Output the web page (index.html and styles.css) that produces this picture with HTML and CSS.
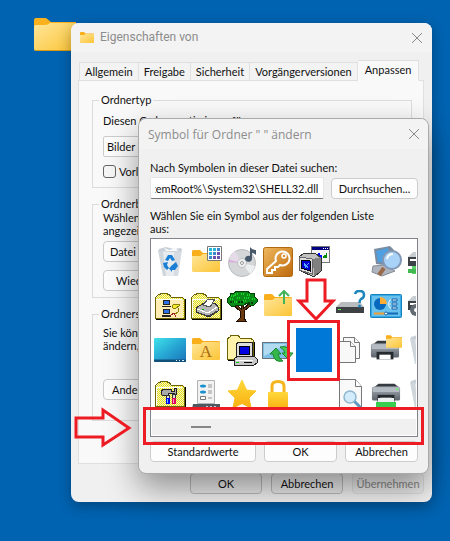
FILE: index.html
```
<!DOCTYPE html>
<html lang="de">

<head>
    <meta charset="utf-8">
    <title>Eigenschaften</title>
    <link rel="stylesheet" href="styles.css">
</head>

<body>
    <svg class="defs" width="0" height="0" aria-hidden="true">
        <defs>
            <linearGradient id="gold" x1="0" y1="0" x2="1" y2="1">
                <stop offset="0" stop-color="#ffe69a" />
                <stop offset="1" stop-color="#fbc435" />
            </linearGradient>
            <linearGradient id="blue" x1="0" y1="0" x2="1" y2="1">
                <stop offset="0" stop-color="#3fe3ea" />
                <stop offset="0.5" stop-color="#27a7d4" />
                <stop offset="1" stop-color="#1a72b8" />
            </linearGradient>
            <linearGradient id="orange" x1="0" y1="0" x2="1" y2="1">
                <stop offset="0" stop-color="#efb75c" />
                <stop offset="1" stop-color="#bd6a0c" />
            </linearGradient>
            <linearGradient id="star" x1="0" y1="0" x2="0" y2="1">
                <stop offset="0" stop-color="#ffd83a" />
                <stop offset="1" stop-color="#f9b011" />
            </linearGradient>
            <linearGradient id="steel" x1="0" y1="0" x2="0" y2="1">
                <stop offset="0" stop-color="#a9b0b8" />
                <stop offset="1" stop-color="#5c636b" />
            </linearGradient>
            <pattern id="dither" width="2" height="2" patternUnits="userSpaceOnUse">
                <rect width="2" height="2" fill="#e9e9d8" />
                <rect width="1" height="1" fill="#f4f000" />
                <rect x="1" y="1" width="1" height="1" fill="#e8e000" />
            </pattern>
            <symbol id="folder" viewBox="0 0 28 22">
                <path d="M0 1.500Q0 0 1.500 0H8L11 3H26.500Q28 3 28 4.500V10H0z" fill="#f9ae1c" />
                <path d="M0 6H8.500L11 4H26.500Q28 4 28 5.500V20.500Q28 22 26.500 22H1.500Q0 22 0 20.500z" fill="url(#gold)" />
            </symbol>
            <symbol id="oldfolder" viewBox="0 0 32 32">
                <path d="M1 28V8L4 5V4H6V3H13V4H15L17 7H28L30 9V28z" fill="url(#dither)" stroke="#6b6400" />
                <path d="M2 29.500H31.500V9" fill="none" stroke="#000" stroke-width="1.500" />
                <path d="M2.500 27V9H28" fill="none" stroke="#fff" />
            </symbol>
            <symbol id="printer" viewBox="0 0 32 32">
                <path d="M3 10L8 6H25L30 10z" fill="#343a40" />
                <path d="M1 11Q1 9 3 9H29Q31 9 31 11V22Q31 24 29 24H3Q1 24 1 22z" fill="url(#steel)" />
                <path d="M2 10H30V15H2z" fill="#b4bbc2" />
                <path d="M7 18H25V26H7z" fill="#252a2f" />
                <path d="M10 21H22V26H10z" fill="#fff" />
                <circle cx="28" cy="12" r="1" fill="#5f5" />
            </symbol>
            <symbol id="bin" viewBox="0 0 32 32">
                <path d="M4 4L28 3 24 30H9z" fill="#e8ecef" />
                <path d="M4 4L9 30 12 30 9 5z" fill="#cfd6dc" />
                <path d="M20 5L28 3 24 30H20z" fill="#d6dce1" />
                <path d="M5 3L12 1 20 3 27 2 28 5 18 6 5 5z" fill="#c8cfd6" />
                <path d="M10 2L15 4 22 2 24 5 12 5z" fill="#f7f9fa" />
            </symbol>
        </defs>
    </svg>

    <main class="desktop">
        <svg class="desktop-folder" viewBox="0 0 42 34">
            <path d="M0 2Q0 0 2 0H12L17 4H42V16H0z" fill="#f9b21d" />
            <path d="M0 9Q0 7 2 7H11Q14 7 16 5H42V33H2Q0 33 0 31z" fill="url(#gold)" />
            <path d="M1 32.500H42" stroke="#d99a13" />
        </svg>

        <section class="window properties">
            <header class="titlebar">
                <svg class="title-icon" viewBox="0 0 28 22"><use href="#folder" /></svg>
                <h1>Eigenschaften von</h1>
                <button class="close" aria-label="Schließen"><svg viewBox="0 0 10 10"><path d="M0 0L10 10M10 0L0 10" /></svg></button>
            </header>
            <nav class="tabs">
                <button class="tab">Allgemein</button>
                <button class="tab">Freigabe</button>
                <button class="tab">Sicherheit</button>
                <button class="tab">Vorgängerversionen</button>
                <button class="tab active">Anpassen</button>
            </nav>
            <div class="panel">
                <fieldset class="group type">
                    <legend>Ordnertyp</legend>
                    <label for="typ">Diesen Ordner optimieren für:</label>
                    <select id="typ">
                        <option>Bilder</option>
                    </select>
                    <div class="check">
                        <input type="checkbox" id="vorlage">
                        <label for="vorlage">Vorlage</label>
                    </div>
                </fieldset>
                <fieldset class="group image">
                    <legend>Ordnerbilder</legend>
                    <p>Wählen<br>angezeigt</p>
                    <button class="btn">Datei auswählen</button>
                    <button class="btn">Wiederher</button>
                </fieldset>
                <fieldset class="group symbol">
                    <legend>Ordnersymbole</legend>
                    <p>Sie können<br>ändern, das</p>
                    <button class="btn">Anderes</button>
                </fieldset>
            </div>
            <footer class="buttons">
                <button class="btn">OK</button>
                <button class="btn">Abbrechen</button>
                <button class="btn" disabled>Übernehmen</button>
            </footer>
        </section>

        <section class="window chooser">
            <header class="titlebar">
                <h2>Symbol für Ordner " " ändern</h2>
                <button class="close" aria-label="Schließen"><svg viewBox="0 0 10 10"><path d="M0 0L10 10M10 0L0 10" /></svg></button>
            </header>
            <div class="chooser-body">
                <label for="datei">Nach Symbolen in dieser Datei suchen:</label>
                <div class="file-row">
                    <input type="text" id="datei" value="%SystemRoot%\System32\SHELL32.dll">
                    <button class="btn">Durchsuchen...</button>
                </div>
                <p class="hint">Wählen Sie ein Symbol aus der folgenden Liste<br>aus:</p>
                <div class="list">
                    <div class="icons">
                        <button class="icon" aria-label="Papierkorb">
                            <svg viewBox="0 0 32 32">
                                <use href="#bin" />
                                <path d="M11 14L14 9H18L21 14 18 15 16 12 14 15zM9 17L14 16 13 19 15 22 13 24 10 21zM17 20L22 16 24 20 21 24H18V26L15 22.500 18 19z" fill="#1c7fd6" />
                            </svg>
                        </button>
                        <button class="icon" aria-label="Programme">
                            <svg viewBox="0 0 32 32">
                                <use href="#folder" x="2" y="4" width="28" height="22" />
                                <path d="M17.500 0.500H31.500V14.500H17.500z" fill="#fff" stroke="#777" />
                                <path d="M19 2h3v3h-3zM19 6h3v3h-3zM23 2h3v3h-3z" fill="#29b5d8" />
                                <path d="M27 2h3v3h-3zM23 6h3v3h-3zM19 10h3v3h-3z" fill="#3b87cf" />
                                <path d="M27 6h3v3h-3zM23 10h3v3h-3zM27 10h3v3h-3z" fill="#6b50ae" />
                            </svg>
                        </button>
                        <button class="icon" aria-label="Musik">
                            <svg viewBox="0 0 32 32">
                                <circle cx="16" cy="17" r="13.500" fill="#d4d6d8" stroke="#b9bcbf" />
                                <path d="M16 17L3 13A14 14 0 0 1 9 5z" fill="#e6dbe8" />
                                <path d="M16 17L24 28A14 14 0 0 0 29 20z" fill="#edf0f1" />
                                <path d="M16 17L3 14V16z" fill="#dca7dd" />
                                <circle cx="16" cy="17" r="4.500" fill="#eceeef" stroke="#bfc2c4" />
                                <circle cx="16" cy="17" r="1.500" fill="#fff" stroke="#999" />
                                <path d="M24 1Q26 4 30 4V9Q28 7 26 7V13A3.500 3 0 1 1 24 10z" fill="#46586a" />
                            </svg>
                        </button>
                        <button class="icon" aria-label="Schlüssel">
                            <svg viewBox="0 0 32 32">
                                <rect x="1.500" y="1.500" width="29" height="29" rx="2" fill="url(#orange)" stroke="#b0690f" />
                                <path d="M14 15A7 7 0 1 1 18 19L16 21H13V24H10V27H5V23z" fill="none" stroke="#fff" stroke-width="2" />
                                <circle cx="22" cy="10" r="2" fill="none" stroke="#fff" stroke-width="1.500" />
                            </svg>
                        </button>
                        <button class="icon" aria-label="Computer">
                            <svg viewBox="0 0 32 32" shape-rendering="crispEdges">
                                <path d="M13 0H31V16H13z" fill="#f4f4f4" stroke="#777" />
                                <path d="M14 1H31V4H14z" fill="#000080" />
                                <path d="M25 2h1v1h-1zM27 2h1v1h-1zM29 2h1v1h-1z" fill="#fff" />
                                <path d="M20 7h2v2h2v3h-2v-2h-2z" fill="#00f" />
                                <path d="M26 9h2v-2h1v5h-4v-2h1z" fill="#080" />
                                <path d="M1 11L6 7H17L23 12V25L16 31 1 24z" fill="#c0c0c0" stroke="#333" />
                                <path d="M15 13L23 11V25L16 30z" fill="#808080" />
                                <path d="M1 11L14 13V28L1 24z" fill="#ddd" stroke="#666" />
                                <path d="M3 14L12 15V25L3 22z" fill="#0000d0" stroke="#000" />
                                <path d="M6 17h1v1h1v1h1v-1h1v-1h1v1h-1v1h-1v1h1v2h-1v-1h-1v1h-1v-2h-1z" fill="#5af" />
                            </svg>
                        </button>
                        <span class="icon"></span>
                        <button class="icon" aria-label="Suchen">
                            <svg viewBox="0 0 32 32">
                                <path d="M4 3L20 0 24 4 21 20 6 18z" fill="#7c8ca0" />
                                <path d="M6 5L18 2 20 17 8 16z" fill="#4fa0e3" />
                                <path d="M3 20L15 19 25 25 12 30 2 26z" fill="#aeb5bf" stroke="#858c98" />
                                <path d="M14 22L9 29" stroke="#9b6a48" stroke-width="4" />
                                <circle cx="22" cy="14" r="9" fill="#a9d2f8" stroke="#8197b5" stroke-width="2" />
                                <path d="M17 13Q18 8 23 8" fill="none" stroke="#fff" stroke-width="2" />
                            </svg>
                        </button>
                        <button class="icon" aria-label="Laufwerk">
                            <svg viewBox="0 0 32 32">
                                <path d="M2 11L7 6H28V11z" fill="#c8cdd2" />
                                <path d="M2 11H30V20H2z" fill="#3d4247" />
                                <path d="M4 13H30V15H4z" fill="#fff" />
                                <path d="M6 20H28V28H6z" fill="#5ad169" />
                                <path d="M2 23H12V27H2z" fill="#43b750" />
                            </svg>
                        </button>

                        <button class="icon" aria-label="Netzwerkordner">
                            <svg viewBox="0 0 32 32" shape-rendering="crispEdges">
                                <use href="#oldfolder" />
                                <path d="M2 10H29V28H2z" fill="#ffedb4" />
                                <path d="M9 10h7v5h-7zM8 16h9v1h-9zM9 19h7v5h-7zM8 25h9v2h-9z" fill="#222" />
                                <path d="M10 11h5v3h-5zM10 20h5v3h-5z" fill="#2b72e8" />
                                <path d="M18 16L20 14H25V16L22 18H19z" fill="#f4ec30" stroke="#8a8000" />
                                <path d="M24 18V22L21 24" fill="none" stroke="#8a8000" />
                                <path d="M16 26L20 23 22 27" fill="none" stroke="#a02020" />
                            </svg>
                        </button>
                        <button class="icon" aria-label="Druckerordner">
                            <svg viewBox="0 0 32 32" shape-rendering="crispEdges">
                                <use href="#oldfolder" />
                                <path d="M6 18L14 13H25L28 17V21L19 27 6 22z" fill="#b8b8b8" stroke="#333" />
                                <path d="M13 15L18 9H25L20 17z" fill="#fff" stroke="#555" />
                                <path d="M7 19L18 23 27 17" fill="none" stroke="#fff" />
                                <path d="M8 23L19 26 27 21" fill="none" stroke="#444" />
                                <path d="M12 19h2v1h-2z" fill="#0a0" />
                            </svg>
                        </button>
                        <button class="icon" aria-label="Baum">
                            <svg viewBox="0 0 32 32" shape-rendering="crispEdges">
                                <path d="M7 15L14 21V28L11 31H20L18 28V21L26 15 24 13 17 19V13H15V19L9 13z" fill="#6b3a10" stroke="#1e0c00" />
                                <path d="M1 9L4 6V3H8L11 1H21L24 3H28V6L31 9V12L28 15H24L21 13 18 15H12L9 16H5L1 12z" fill="#0a8a16" stroke="#043f08" />
                                <path d="M5 6H9V4H13M15 4H19M21 5H25M4 9H8M11 8H15M18 8H23M26 9H29M8 12H12M17 11H21" fill="none" stroke="#16d52b" stroke-width="2" stroke-dasharray="1 1" />
                                <path d="M4 12H8M12 12H17M22 13H28" stroke="#033d08" stroke-width="2" stroke-dasharray="2 1" />
                            </svg>
                        </button>
                        <button class="icon" aria-label="Ordner nach oben">
                            <svg viewBox="0 0 32 32">
                                <use href="#folder" x="2" y="4" width="28" height="22" />
                                <path d="M22 14V2M17 6L22 1 27 6" fill="none" stroke="#43b45c" stroke-width="2" />
                            </svg>
                        </button>
                        <span class="icon"></span>
                        <button class="icon" aria-label="Unbekanntes Laufwerk">
                            <svg viewBox="0 0 32 32">
                                <path d="M2 17L7 12H26L30 17z" fill="#babdbf" />
                                <path d="M2 17H30V23H2z" fill="#3e4244" />
                                <path d="M4 19H7V20H4z" fill="#5cf45c" />
                                <path d="M21 4Q22 0.500 26 1 30 1 30 5 30 8 27 9 25.500 10 25.500 13" fill="none" stroke="#1d87bd" stroke-width="2.500" />
                                <circle cx="25.500" cy="16" r="1.500" fill="#1d87bd" />
                            </svg>
                        </button>
                        <button class="icon" aria-label="Systemsteuerung">
                            <svg viewBox="0 0 32 32">
                                <rect x="0.500" y="4.500" width="31" height="23" rx="1" fill="#39a9e5" stroke="#1683bf" />
                                <path d="M2 6H30V26H2z" fill="#b2e6fb" opacity="0.400" />
                                <circle cx="10" cy="14" r="6" fill="#0768bd" />
                                <path d="M10 14V7A7 7 0 0 1 17 14z" fill="#ffae35" />
                                <path d="M18 14L20 10H23M19 14H28M18 14L20 18H23" fill="none" stroke="#eef8ff" />
                                <path d="M22 9h5v2h-5zM22 13h5v2h-5zM22 17h5v2h-5z" fill="#fff" stroke="#0c5daa" />
                                <path d="M4 23.500H16" stroke="#ef9e32" stroke-width="2" />
                                <path d="M16 23.500H28" stroke="#1269b4" stroke-width="2" />
                                <circle cx="16" cy="23.500" r="1.500" fill="#fff" stroke="#1269b4" />
                            </svg>
                        </button>
                        <button class="icon" aria-label="Laufwerk">
                            <svg viewBox="0 0 32 32">
                                <path d="M2 11L7 6H28V11z" fill="#c8cdd2" />
                                <path d="M2 11H30V20H2z" fill="#3d4247" />
                                <path d="M4 13H30V15H4z" fill="#fff" />
                                <circle cx="10" cy="20" r="6" fill="#626a72" />
                                <circle cx="10" cy="20" r="2" fill="#fff" />
                            </svg>
                        </button>

                        <button class="icon" aria-label="Desktop">
                            <svg viewBox="0 0 32 32">
                                <rect x="0" y="4" width="32" height="24" rx="1" fill="url(#blue)" />
                                <path d="M0 25.500H32V27Q32 28 31 28H1Q0 28 0 27z" fill="#124f79" />
                                <path d="M22 26h1v1h-1zM25 26h1v1h-1zM28 26h2v1h-2z" fill="#d6f3ff" />
                            </svg>
                        </button>
                        <button class="icon" aria-label="Schriftarten">
                            <svg viewBox="0 0 32 32">
                                <use href="#folder" x="2" y="4" width="28" height="22" />
                                <text class="font-letter" x="16" y="23" text-anchor="middle">A</text>
                            </svg>
                        </button>
                        <button class="icon" aria-label="Computerordner">
                            <svg viewBox="0 0 32 32" shape-rendering="crispEdges">
                                <path d="M1 25V5L4 3 5 1H12L14 4H24L27 6V25z" fill="#fff3ac" stroke="#6b6400" />
                                <path d="M2 26H28V8" fill="none" stroke="#000" />
                                <path d="M10 10L13 8H26V22L24 24H11z" fill="#ddd" stroke="#222" />
                                <path d="M13 12H23V20H13z" fill="#0000e0" stroke="#000" />
                                <path d="M8 25L12 22H28L31 25V29L28 31H8z" fill="#c8c8c8" stroke="#222" />
                                <path d="M10 26H27" stroke="#fff" />
                                <path d="M18 28H26" stroke="#000" />
                                <path d="M10 28h3v1h-3z" fill="#0c0" />
                            </svg>
                        </button>
                        <button class="icon" aria-label="Synchronisieren">
                            <svg viewBox="0 0 32 32">
                                <rect x="0.500" y="8.500" width="26" height="16" fill="#7fc0e6" stroke="#69747c" />
                                <path d="M2 10H25L2 22z" fill="#c7e7f7" opacity="0.700" />
                                <path d="M8 20L14 14 19 20H16Q17 25 21 27 12 29 11 20z" fill="#35b64a" stroke="#188a2c" />
                                <path d="M31 19L26 25 20 19H23Q22 15 18 13 27 11 28 19z" fill="#4bcc58" stroke="#188a2c" />
                            </svg>
                        </button>
                        <button class="icon selected" aria-label="Leeres Symbol"></button>
                        <button class="icon" aria-label="Kopieren">
                            <svg viewBox="0 0 32 32" fill="#f8f8f8" stroke="#777">
                                <path d="M9.500 3.500H20.500L25.500 8.500V24.500H9.500z" />
                                <path d="M20.500 3.500V8.500H25.500" />
                                <path d="M4.500 7.500H16.500L21.500 12.500V28.500H4.500z" />
                                <path d="M16.500 7.500V12.500H21.500" />
                            </svg>
                        </button>
                        <button class="icon" aria-label="Drucker">
                            <svg viewBox="0 0 32 32">
                                <use href="#printer" width="30" height="30" y="1" />
                                <use href="#folder" x="16" y="1" width="16" height="13" />
                            </svg>
                        </button>
                        <button class="icon" aria-label="Papierkorb"><svg viewBox="0 0 32 32"><use href="#bin" /></svg></button>

                        <button class="icon" aria-label="Verwaltung">
                            <svg viewBox="0 0 32 32" shape-rendering="crispEdges">
                                <use href="#oldfolder" />
                                <path d="M7 13L10 11H17V13H20V10H22V16H20V15H14V17H8z" fill="#aaa" stroke="#222" />
                                <path d="M12 17h3v4h-3zM18 16h3v5h-3z" fill="#ddd" stroke="#333" />
                                <path d="M12 20h4v6h-4z" fill="#00e" />
                                <path d="M18 20h4v6h-4z" fill="#e00060" />
                                <path d="M13 21h1v4h-1z" fill="#5cf" />
                                <path d="M19 21h1v4h-1z" fill="#f9c" />
                            </svg>
                        </button>
                        <button class="icon" aria-label="Server">
                            <svg viewBox="0 0 32 32">
                                <path d="M7.500 2.500H24.500V25.500H7.500z" fill="#f2f2f2" stroke="#b0b4b7" />
                                <ellipse cx="13" cy="8" rx="3" ry="1.500" fill="#1690ce" />
                                <ellipse cx="13" cy="14" rx="3" ry="1.500" fill="#1690ce" />
                                <path d="M10.500 18.500H15.500V21.500H10.500z" fill="#fff" stroke="#777" />
                                <path d="M18 7H22M18 9H22M18 13H22M18 15H22M18 20H22" stroke="#999" />
                                <path d="M3 26H30V31H2z" fill="#4d5861" />
                                <path d="M16 28h2v2h-2zM20 28h2v2h-2zM24 28h2v2h-2z" fill="#c4d0d8" />
                            </svg>
                        </button>
                        <button class="icon" aria-label="Favoriten">
                            <svg viewBox="0 0 32 32">
                                <path d="M16 2L20.500 12 30 13 23 20 25 30 16 25.500 7 30 9 20 2 13 11.500 12z" fill="url(#star)" stroke="url(#star)" stroke-linejoin="round" />
                            </svg>
                        </button>
                        <button class="icon" aria-label="Gesperrt">
                            <svg viewBox="0 0 32 32">
                                <path d="M10 16V8Q10 3.500 16 3.500 22 3.500 22 8V16" fill="none" stroke="#f6b51d" stroke-width="3" />
                                <rect x="6" y="14" width="20" height="18" rx="1" fill="url(#star)" />
                            </svg>
                        </button>
                        <span class="icon"></span>
                        <button class="icon" aria-label="Dokument suchen">
                            <svg viewBox="0 0 32 32">
                                <path d="M5.500 1.500H21.500L27.500 8.500V31.500H5.500z" fill="#f9f9f9" stroke="#777" />
                                <path d="M21.500 1.500V8.500H27.500" fill="#fff" stroke="#777" />
                                <path d="M20 23L27 30" stroke="#5c9ac2" stroke-width="3" />
                                <circle cx="16" cy="19" r="6" fill="#d2ecfc" stroke="#8fb7d0" stroke-width="1.500" />
                            </svg>
                        </button>
                        <button class="icon" aria-label="Drucker">
                            <svg viewBox="0 0 32 32">
                                <use href="#printer" width="30" height="30" x="1" />
                                <path d="M6 24H26V32H6z" fill="#38cf51" />
                                <path d="M8 20H24V24H8z" fill="#eef1f2" />
                            </svg>
                        </button>
                        <button class="icon" aria-label="Papierkorb"><svg viewBox="0 0 32 32"><use href="#bin" /></svg></button>
                    </div>
                    <div class="scrollbar">
                        <div class="thumb"></div>
                    </div>
                </div>
                <div class="actions">
                    <button class="btn wide">Standardwerte</button>
                    <button class="btn">OK</button>
                    <button class="btn">Abbrechen</button>
                </div>
            </div>
            <div class="mark mark-icon"></div>
            <div class="mark mark-scroll"></div>
            <svg class="arrow arrow-down" viewBox="0 0 40 44"><path d="M11 2H29V23H37L20 41 3 23H11z" /></svg>
            <svg class="arrow arrow-right" viewBox="0 0 60 42"><path d="M3 11H30V3L56 21 30 38V30H3z" /></svg>
        </section>
    </main>

    <script>
        // show the end of the path
        var datei = document.getElementById('datei');
        datei.scrollLeft = datei.scrollWidth;
    </script>
</body>

</html>
```
FILE: styles.css
```
* {
    box-sizing: border-box;
}

body {
    margin: 0;
    font-family: Lato, sans-serif;
    font-size: 11px;
    line-height: 13px;
    color: #111;
}

button,
input,
select {
    font: inherit;
    color: inherit;
    margin: 0;
}

p {
    margin: 0;
    white-space: nowrap;
}

.defs {
    position: absolute;
}

.desktop {
    position: relative;
    min-height: 100vh;
    overflow: hidden;
    background: #0063b1;
}

.desktop-folder {
    position: absolute;
    left: 34px;
    top: 18px;
    width: 42px;
    height: 34px;
}

/* windows */

.window {
    position: absolute;
    background: #f0f0f0;
    border-radius: 8px;
}

.properties {
    left: 71px;
    right: 18px;
    top: 23px;
    box-shadow: 0 4px 14px rgba(0, 0, 0, 0.3);
}

.chooser {
    left: 138px;
    right: 21px;
    top: 118px;
    border: 1px solid #aaa;
    box-shadow: 0 14px 32px rgba(0, 0, 0, 0.4);
}

.titlebar {
    display: flex;
    align-items: center;
    height: 29px;
    padding: 0 10px 0 9px;
    gap: 6px;
    background: #f3f3f3;
    border-radius: 8px 8px 0 0;
}

.titlebar h1,
.titlebar h2 {
    flex: 1;
    margin: 0;
    font-family: Roboto, sans-serif;
    font-size: 12px;
    font-weight: normal;
    color: #8c8c8c;
    white-space: nowrap;
}

.titlebar h2 {
    font-family: "Open Sans", sans-serif;
}

.chooser .titlebar {
    padding: 0 9px;
    height: 30px;
}

.title-icon {
    width: 14px;
    height: 11px;
}

.close {
    display: flex;
    padding: 0;
    border: 0;
    background: none;
}

.close svg {
    width: 10px;
    height: 10px;
    overflow: visible;
    stroke: #888;
}

/* tabs */

.tabs {
    position: relative;
    z-index: 1;
    display: flex;
    align-items: flex-end;
    height: 29px;
    padding: 0 8px;
    margin-bottom: -1px;
}

.tab {
    height: 19px;
    padding: 0 5px;
    border: 1px solid #e0e0e0;
    border-left-width: 0;
    background: #f3f3f3;
    white-space: nowrap;
}

.tab:first-child {
    border-left-width: 1px;
}

.tab.active {
    height: 21px;
    padding: 0 7px 2px;
    background: #f9f9f9;
    border-bottom-color: #f9f9f9;
}

.panel {
    margin: 0 8px 0 7px;
    padding: 12px 11px 42px 13px;
    border: 1px solid #e0e0e0;
    background: #f9f9f9;
}

.group {
    display: block;
    min-width: 0;
    margin: 0 0 9px;
    padding: 0 10px 9px;
    border: 1px solid #dcdcdc;
}

.group:last-child {
    margin-bottom: 0;
}

.group legend {
    margin-left: -4px;
    padding: 0 2px;
    line-height: 14px;
}

.group > label {
    display: block;
    margin-top: 7px;
}

.group select {
    display: block;
    width: 100%;
    height: 21px;
    margin: 9px 0 8px;
    padding: 0 3px;
    appearance: none;
    background: #fdfdfd;
    border: 1px solid #ccc;
    border-radius: 2px;
}

.check {
    display: flex;
    gap: 3px;
    white-space: nowrap;
}

.check input {
    width: 13px;
    height: 13px;
    appearance: none;
    background: #f6f6f6;
    border: 1px solid #666;
    border-radius: 3px;
}

.btn {
    height: 21px;
    padding: 0;
    background: #fdfdfd;
    border: 1px solid #ccc;
    border-radius: 4px;
    white-space: nowrap;
}

.btn:disabled {
    color: #888;
    background: #ebebeb;
    border-color: #ddd;
}

.group .btn {
    display: block;
    width: 120px;
    padding: 0 6px;
    text-align: left;
}

.image {
    padding-bottom: 6px;
}

.image .btn {
    margin-top: 4px;
}

.image .btn + .btn {
    margin-top: 8px;
    padding: 0 12px;
}

.symbol {
    padding-bottom: 20px;
}

.symbol p {
    margin: 5px 0 27px;
}

.symbol .btn {
    padding: 0 8px;
}

.buttons {
    display: flex;
    justify-content: flex-end;
    gap: 9px;
    padding: 9px 8px 8px;
}

.buttons .btn {
    width: 72px;
}

.buttons .btn:not(:disabled) {
    background: #ebebeb;
    border-color: #bbb;
}

/* icon chooser */

.chooser-body {
    padding: 12px 10px 11px 11px;
}

.chooser-body > label {
    display: block;
}

.file-row {
    display: flex;
    align-items: center;
    gap: 7px;
    margin: 3px 0 10px;
}

.file-row input {
    flex: 1;
    min-width: 0;
    height: 22px;
    padding: 0 5px 0 4px;
    background: #fff;
    border: 1px solid #e5e5e5;
    border-bottom-color: #777;
    border-radius: 2px;
}

.file-row .btn {
    width: 87px;
}

.hint {
    margin-bottom: 3px;
}

.list {
    overflow: hidden;
    padding: 1px;
    background: #fff;
    border: 1px solid #82848c;
}

.icons {
    display: grid;
    grid-template-columns: repeat(8, 36px);
    grid-auto-rows: 44px;
    overflow: hidden;
    margin-bottom: 3px;
}

.icon {
    display: flex;
    align-items: center;
    justify-content: center;
    padding: 0;
    border: 0;
    background: none;
}

.icon svg {
    width: 32px;
    height: 32px;
}

.icon.selected {
    background: #0078d7;
}

.font-letter {
    font-family: "Liberation Serif", serif;
    font-size: 17px;
    fill: #a86b12;
}

.scrollbar {
    height: 16px;
    padding: 7px 0 0 39px;
    background: #f0f0f0;
}

.thumb {
    width: 20px;
    height: 2px;
    background: #868686;
}

.actions {
    display: flex;
    justify-content: space-between;
    margin-top: 4px;
}

.actions .btn {
    width: 73px;
}

.actions .wide {
    width: 106px;
}

/* red markers */

.mark {
    position: absolute;
    border: 3px solid #ed1c24;
}

.mark-icon {
    left: 148px;
    top: 201px;
    width: 53px;
    height: 61px;
}

.mark-scroll {
    left: 4px;
    right: 4px;
    top: 288px;
    height: 38px;
}

.arrow {
    position: absolute;
    fill: none;
    stroke: #ed1c24;
    stroke-width: 3px;
}

.arrow-down {
    left: 157px;
    top: 159px;
    width: 40px;
    height: 44px;
}

.arrow-right {
    left: -66px;
    top: 288px;
    width: 60px;
    height: 42px;
}
```
